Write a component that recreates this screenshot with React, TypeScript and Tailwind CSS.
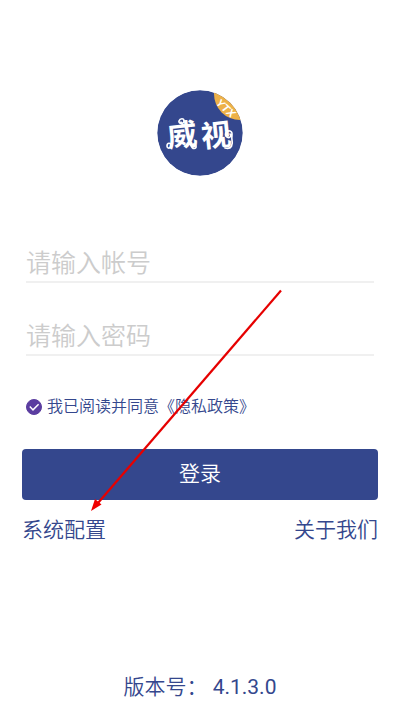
import { useState, type FormEvent } from "react";

function Logo() {
    return (
        <svg viewBox="0 0 86 86" className="h-[86px] w-[86px]" role="img" aria-label="威视">
            <defs>
                <clipPath id="logo-disc">
                    <circle cx="43" cy="43" r="42.7" />
                </clipPath>
            </defs>
            <g clipPath="url(#logo-disc)">
                <circle cx="43" cy="43" r="43" fill="#34478d" />
                <circle cx="83" cy="4" r="26" fill="#edb148" />
            </g>
            <text
                x="69"
                y="22"
                transform="rotate(42 69 18)"
                textAnchor="middle"
                fill="#fff"
                className="font-['Liberation_Sans'] text-[11px] font-bold italic"
            >
                YTX
            </text>
            <g fill="#fff" className="font-['Noto_Sans_CJK_SC',sans-serif] text-[30px] font-bold">
                <text x="10" y="56" transform="rotate(-6 25 45)">威</text>
                <text x="44" y="56" transform="rotate(-6 59 45)">视</text>
            </g>
            {/* curls on the stroke ends */}
            <g fill="none" stroke="#fff" strokeWidth="1.6" strokeLinecap="round">
                <path d="M15 52c1 6-5 8-5 4s4-3 4-1" />
                <path d="M27 36c-1-3-6-2-5-5s5-3 5 0-3 2-3 1" />
                <path d="M34 55c1 5 6 4 5 1s-4-2-3 0" />
                <path d="M68 58c7 2 8-4 7-8s2-8-2-9-6 4-3 6 5-2 3-3" />
            </g>
        </svg>
    );
}

function Field({ type, label }: { type: string; label: string }) {
    return (
        <input
            type={type}
            aria-label={label}
            placeholder={label}
            className="block h-[45px] w-full border-b-2 border-[#f0f0f0] bg-transparent pt-0.5 font-['Noto_Sans_CJK_SC',sans-serif] text-[25px] leading-[38px] font-[350] text-[#34478d] outline-none placeholder:text-[#cccccc]"
        />
    );
}

export default function App() {
    const [agreed, setAgreed] = useState(true);

    const handleSubmit = (e: FormEvent) => {
        e.preventDefault();
    };

    return (
        <main className="relative flex min-h-screen flex-col bg-white px-[22px] pt-[90px] pb-2 font-[Roboto,'Noto_Sans_CJK_SC',sans-serif] font-[350] text-[#34478d]">
            <div className="flex justify-center">
                <Logo />
            </div>

            <form onSubmit={handleSubmit} className="mt-[62px]">
                <div className="flex flex-col gap-7 px-1">
                    <Field type="text" label="请输入帐号" />
                    <Field type="password" label="请输入密码" />
                </div>

                <div className="mt-[39px] flex h-6 items-center gap-[5px] pl-1">
                    <span className="relative flex h-4 w-4">
                        <input
                            id="agree"
                            type="checkbox"
                            checked={agreed}
                            onChange={(e) => setAgreed(e.target.checked)}
                            className="h-4 w-4 appearance-none rounded-full border border-[#5b3da0] checked:bg-[#5b3da0]"
                        />
                        {agreed && (
                            <svg viewBox="0 0 16 16" className="pointer-events-none absolute inset-0" fill="none" stroke="#fff" strokeWidth="1.5">
                                <path d="M3.8 7.6l3.2 3.3 5.6-5.6" />
                            </svg>
                        )}
                    </span>
                    <label htmlFor="agree" className="text-base leading-6">
                        我已阅读并同意<a href="#privacy">《隐私政策》</a>
                    </label>
                </div>

                <button type="submit" className="mt-[30px] h-[51px] w-full rounded bg-[#34478d] text-[21px] text-white">
                    登录
                </button>
            </form>

            <nav className="mt-[14px] flex justify-between text-[21px] leading-8">
                <a href="#config">系统配置</a>
                <a href="#about">关于我们</a>
            </nav>

            <p className="mt-auto text-center text-[21px] leading-8">
                版本号： <span className="font-normal">4.1.3.0</span>
            </p>

            {/* arrow pointing at the config link */}
            <svg
                viewBox="0 0 192 223"
                className="pointer-events-none absolute top-[289px] left-[90px] h-[223px] w-[192px]"
                aria-hidden="true"
            >
                <path d="M191 1.500L8 214" stroke="#e60000" strokeWidth="2.2" fill="none" />
                <path d="M1 222L5 210L11.500 215.500z" fill="#f00000" />
            </svg>
        </main>
    );
}
